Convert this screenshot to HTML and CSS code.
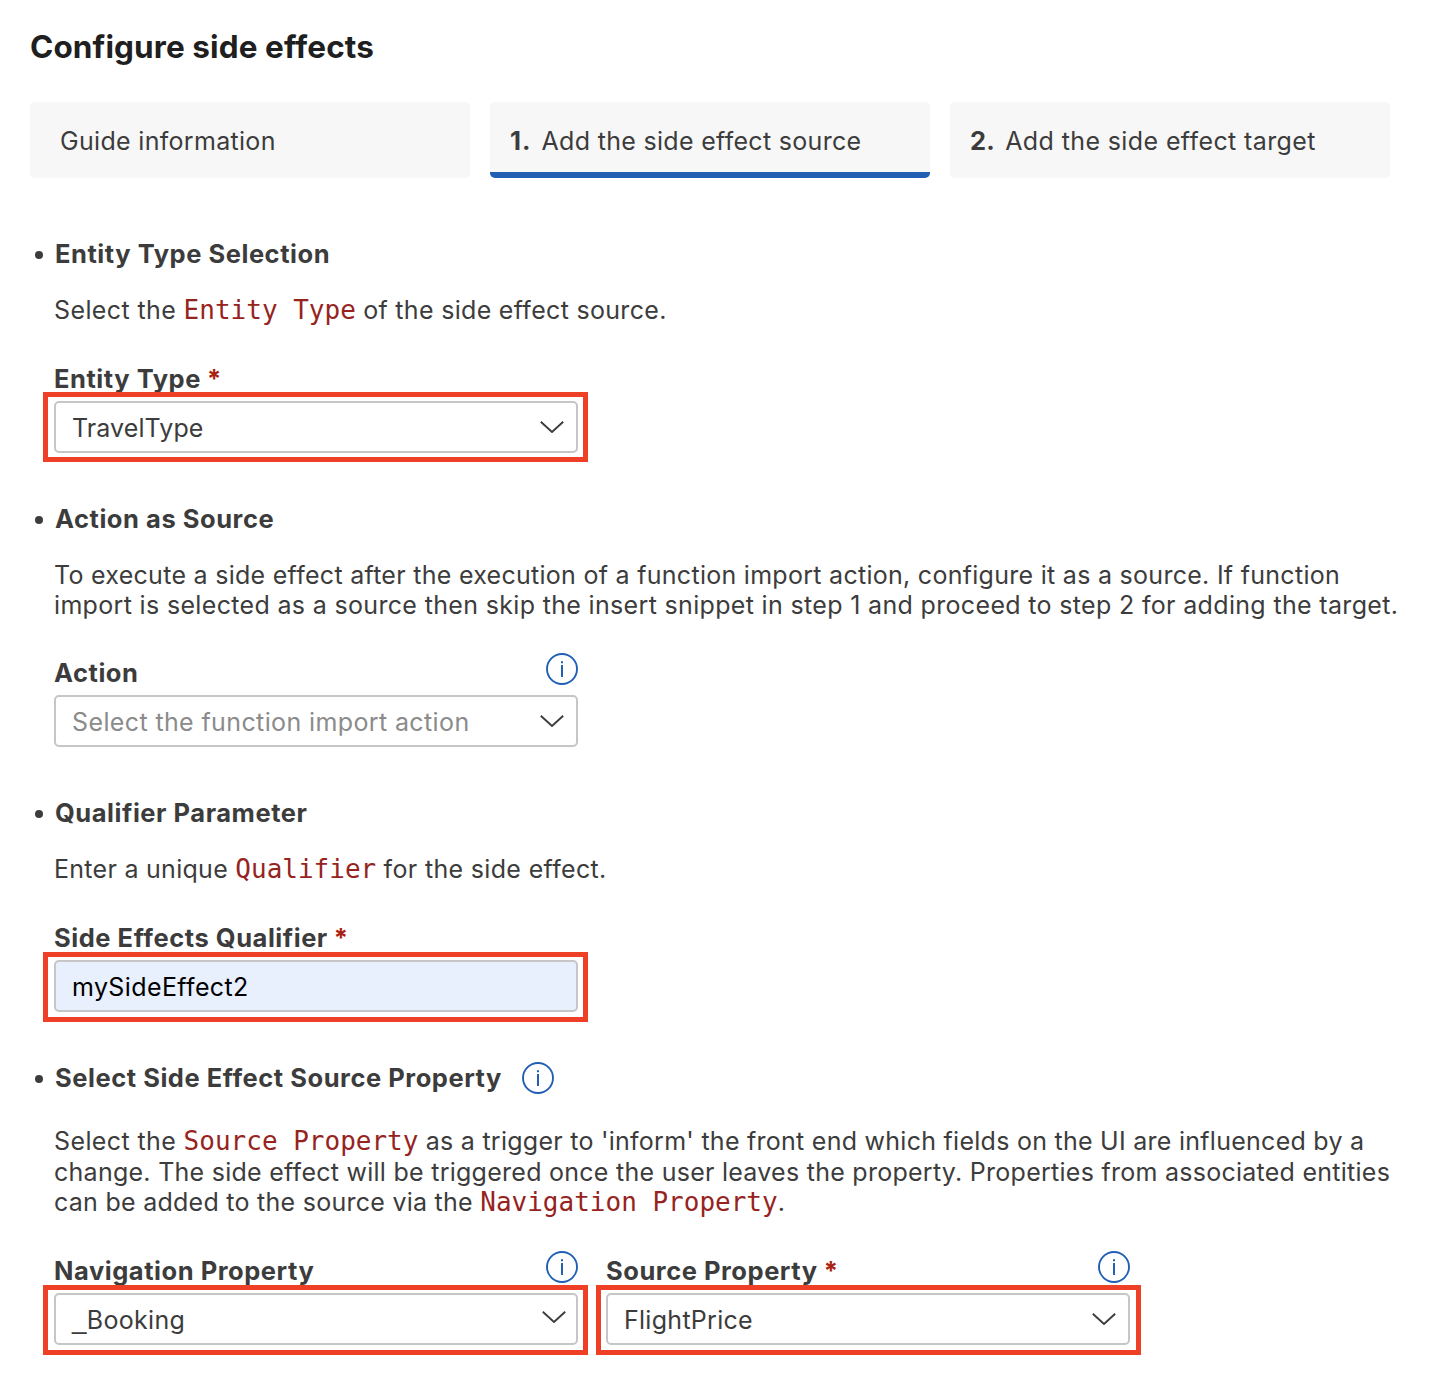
FILE: index.html
```html
<!DOCTYPE html>
<html lang="en">
<head>
<meta charset="utf-8">
<title>Configure side effects</title>
<link rel="stylesheet" href="styles.css">
</head>
<body>
<svg class="defs" aria-hidden="true">
  <symbol id="chevron" viewBox="0 0 24 12"><path d="M0.8 0.8 12 11 23.2 0.8" fill="none" stroke="#3c3c3c" stroke-width="1.9"/></symbol>
  <symbol id="info" viewBox="0 0 32 32"><circle cx="16" cy="16" r="15" fill="none" stroke="#215fb5" stroke-width="1.9"/><path d="M15 8.2h2v2h-2zM15 12h2v12h-2z" fill="#215fb5"/></symbol>
</svg>
<main class="page">
  <h1 class="title">Configure side effects</h1>
  <nav class="steps">
    <div class="step step-guide">Guide information</div>
    <div class="step step-active"><b class="wide">1.</b><span>Add the side effect source</span></div>
    <div class="step"><b>2.</b><span class="loose">Add the side effect target</span></div>
  </nav>

  <section class="section">
    <h2 class="heading">Entity Type Selection</h2>
    <p class="text"><span class="loose">Select the </span><code>Entity Type</code><span> of the side effect source.</span></p>
    <div class="form-item">
      <div class="label"><span>Entity Type</span><span class="required">*</span></div>
      <div class="field marked"><span class="value-tight">TravelType</span><svg class="chevron"><use href="#chevron"/></svg></div>
    </div>
  </section>

  <section class="section section-action">
    <h2 class="heading">Action as Source</h2>
    <p class="text"><span class="snug">To execute a side effect after the execution of a function import action, configure it as a source. If function</span><br><span class="airy">import is selected as a source then skip the insert snippet in step 1 and proceed to step 2 for adding the target.</span></p>
    <div class="form-item">
      <div class="label"><span>Action</span><svg class="info"><use href="#info"/></svg></div>
      <div class="field"><span class="placeholder">Select the function import action</span><svg class="chevron"><use href="#chevron"/></svg></div>
    </div>
  </section>

  <section class="section">
    <h2 class="heading">Qualifier Parameter</h2>
    <p class="text"><span class="snug">Enter a unique </span><code>Qualifier</code><span class="airy"> for the side effect.</span></p>
    <div class="form-item">
      <div class="label"><span>Side Effects Qualifier</span><span class="required">*</span></div>
      <div class="field field-filled marked marked-low"><span class="loose">mySideEffect2</span></div>
    </div>
  </section>

  <section class="section section-source">
    <h2 class="heading">Select Side Effect Source Property<svg class="info info-heading"><use href="#info"/></svg></h2>
    <p class="text"><span class="loose">Select the </span><code>Source Property</code><span class="close"> as a trigger to 'inform' the front end which fields on the UI are influenced by a</span><br><span class="close">change. The side effect will be triggered once the user leaves the property. Properties from associated entities</span><br><span class="close">can be added to the source via the </span><code>Navigation Property</code>.</p>
    <div class="form-row">
      <div class="form-item">
        <div class="label"><span>Navigation Property</span><svg class="info"><use href="#info"/></svg></div>
        <div class="field marked marked-low field-nav"><span><span class="underscore">_</span>Booking</span><svg class="chevron"><use href="#chevron"/></svg></div>
      </div>
      <div class="form-item">
        <div class="label"><span>Source Property</span><span class="required">*</span><svg class="info"><use href="#info"/></svg></div>
        <div class="field marked marked-low marked-right"><span class="snug">FlightPrice</span><svg class="chevron"><use href="#chevron"/></svg></div>
      </div>
    </div>
  </section>
</main>
</body>
</html>
```
FILE: styles.css
```css
* { box-sizing: border-box; }
body {
  margin: 0;
  background: #fff;
  color: #3c3c3c;
  font: 25px/30px Inter, "Liberation Sans", sans-serif;
  letter-spacing: 0.31px;
  white-space: nowrap;
}
.defs { display: block; width: 0; height: 0; }
.page { height: 1390px; padding: 27px 0 0 30px; overflow: hidden; }
h1, h2, p { margin: 0; }
.title {
  height: 75px;
  font-size: 31.5px;
  line-height: 40px;
  font-weight: 700;
  letter-spacing: 0.1px;
  color: #1f1f1f;
}

/* Tracking variants for running text */
.close { letter-spacing: 0.265px; }
.snug { letter-spacing: 0.28px; }
.airy { letter-spacing: 0.335px; }
.loose { letter-spacing: 0.39px; }
.wide { letter-spacing: 1px; }

/* Guide steps */
.steps { display: flex; gap: 20px; }
.step {
  width: 440px;
  height: 76px;
  padding: 24px 20px 0;
  border-radius: 5px;
  background: #f7f7f7;
  display: flex;
  gap: 10px;
}
.step-guide { padding-left: 30px; }
.step-active { border-bottom: 6px solid #215fb5; }
.step b { font-size: 25.5px; font-weight: 700; }

/* Sections */
.section { margin-top: 51px; padding-left: 24px; }
.steps + .section { margin-top: 61px; }
.heading {
  display: flex;
  align-items: center;
  height: 30px;
  font-size: 25.5px;
  font-weight: 700;
  letter-spacing: 0.54px;
}
.heading::before {
  content: "";
  width: 8px;
  height: 8px;
  margin: 2px 12px 0 -19px;
  border-radius: 50%;
  background: #3c3c3c;
}
.text { margin-top: 26px; line-height: 30.5px; }
.text span { white-space: pre; }
code {
  font: 26px/1px "DejaVu Sans Mono", monospace;
  letter-spacing: 0;
  color: #96231e;
}
.section-action .text { line-height: 30px; }
.section-source .text { margin-top: 33px; }

/* Form controls */
.form-item { width: 524px; margin-top: 38.5px; }
.form-row { display: flex; gap: 28px; }
.section-action .form-item { margin-top: 38px; }
.label { display: flex; height: 37px; font-size: 25.5px; font-weight: 700; letter-spacing: 0.54px; }
.required { margin-left: 6px; color: #aa2311; }
.info { flex: none; width: 32px; height: 32px; margin: -5px 0 0 auto; }
.info-heading { margin: 0 0 0 20px; }
.field {
  position: relative;
  display: flex;
  align-items: flex-start;
  justify-content: space-between;
  height: 52px;
  padding: 10px 12px 0 16px;
  border: 2px solid #c6c6c6;
  border-radius: 5px;
  background: #fff;
}
.field-filled { background: #e8effd; color: #000; }
.placeholder { color: #8b8b8b; letter-spacing: 0.38px; }
.value-tight { letter-spacing: 0.1px; }
.underscore { font: 26px/1px "Liberation Sans", sans-serif; }
.chevron { width: 24px; height: 12px; margin-top: 8px; }
.field-nav { padding-right: 10px; }
.field-nav .chevron { margin-top: 6px; }

.marked::after {
  content: "";
  position: absolute;
  inset: -11px -12px -11px -13px;
  border: 5px solid #ed4027;
}
.marked-low::after { top: -10px; bottom: -12px; }
.marked-right::after { left: -12px; right: -13px; }
```
